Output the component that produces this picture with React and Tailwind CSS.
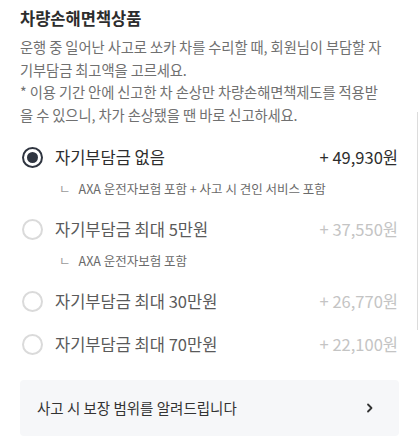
import React from "react";

const options = [
  { label: "자기부담금 없음", price: "+ 49,930원", sub: "AXA 운전자보험 포함 + 사고 시 견인 서비스 포함", selected: true },
  { label: "자기부담금 최대 5만원", price: "+ 37,550원", sub: "AXA 운전자보험 포함" },
  { label: "자기부담금 최대 30만원", price: "+ 26,770원" },
  { label: "자기부담금 최대 70만원", price: "+ 22,100원" },
];

const Radio = ({ on }) =>
  on ? (
    <span className="flex h-[21px] w-[21px] shrink-0 items-center justify-center rounded-full border-2 border-solid border-[#2f3540]">
      <span className="h-[11px] w-[11px] rounded-full bg-[#2f3540]" />
    </span>
  ) : (
    <span className="block h-[21px] w-[21px] shrink-0 rounded-full border-2 border-solid border-[#dadada]" />
  );

export default function App() {
  return (
    <div
      className="relative h-[441px] w-[419px] overflow-hidden bg-white px-5 pt-[6px]"
      style={{ fontFamily: '"Noto Sans CJK KR", "Noto Sans", sans-serif' }}
    >
      {/* thin scrollbar line on the right edge */}
      <div className="absolute right-[1px] top-[112px] h-[218px] w-px bg-[#dcdcdc]" />

      <h1 className="text-[16.5px] font-bold leading-[24px] text-[#2d2d2d]">차량손해면책상품</h1>
      <p className="mt-[6px] text-[14.3px] leading-[22.5px] tracking-[-0.1px] text-[#707070]">
        운행 중 일어난 사고로 쏘카 차를 수리할 때, 회원님이 부담할 자
        <br />
        기부담금 최고액을 고르세요.
        <br />* 이용 기간 안에 신고한 차 손상만 차량손해면책제도를 적용받
        <br />을 수 있으니, 차가 손상됐을 땐 바로 신고하세요.
      </p>

      <div className="mt-[10px] flex flex-col">
        {options.map((o, i) => (
          <div key={i} className="flex flex-col">
            <div className="flex h-[43px] items-center">
              <div className="pl-[2px]">
                <Radio on={o.selected} />
              </div>
              <span
                className={
                  "ml-[12px] flex-1 text-[16.5px] " + (o.selected ? "text-[#2d2d2d]" : "text-[#5a5a5a]")
                }
              >
                {o.label}
              </span>
              <span
                className={
                  "pr-[1px] text-[16.5px] " + (o.selected ? "text-[#2d2d2d]" : "text-[#c4c4c4]")
                }
              >
                {o.price}
              </span>
            </div>
            {o.sub && (
              <div className="flex h-[29px] items-start pl-[39px] pt-[1px] text-[12.5px] leading-[18px] text-[#6a6a6a]">
                <span className="mr-[8px] text-[#9a9a9a]">ㄴ</span>
                <span>{o.sub}</span>
              </div>
            )}
          </div>
        ))}
      </div>

      <div className="mt-[14px] flex h-[56px] items-center justify-between rounded-[4px] bg-[#f6f7f9] pl-[17px] pr-[24px]">
        <span className="text-[14.5px] text-[#333]">사고 시 보장 범위를 알려드립니다</span>
        <svg width="10" height="10" viewBox="0 0 10 10" fill="none">
          <path d="M3 1.5 L6.5 5 L3 8.5" stroke="#333" strokeWidth="1.8" strokeLinecap="round" strokeLinejoin="round" />
        </svg>
      </div>
    </div>
  );
}
